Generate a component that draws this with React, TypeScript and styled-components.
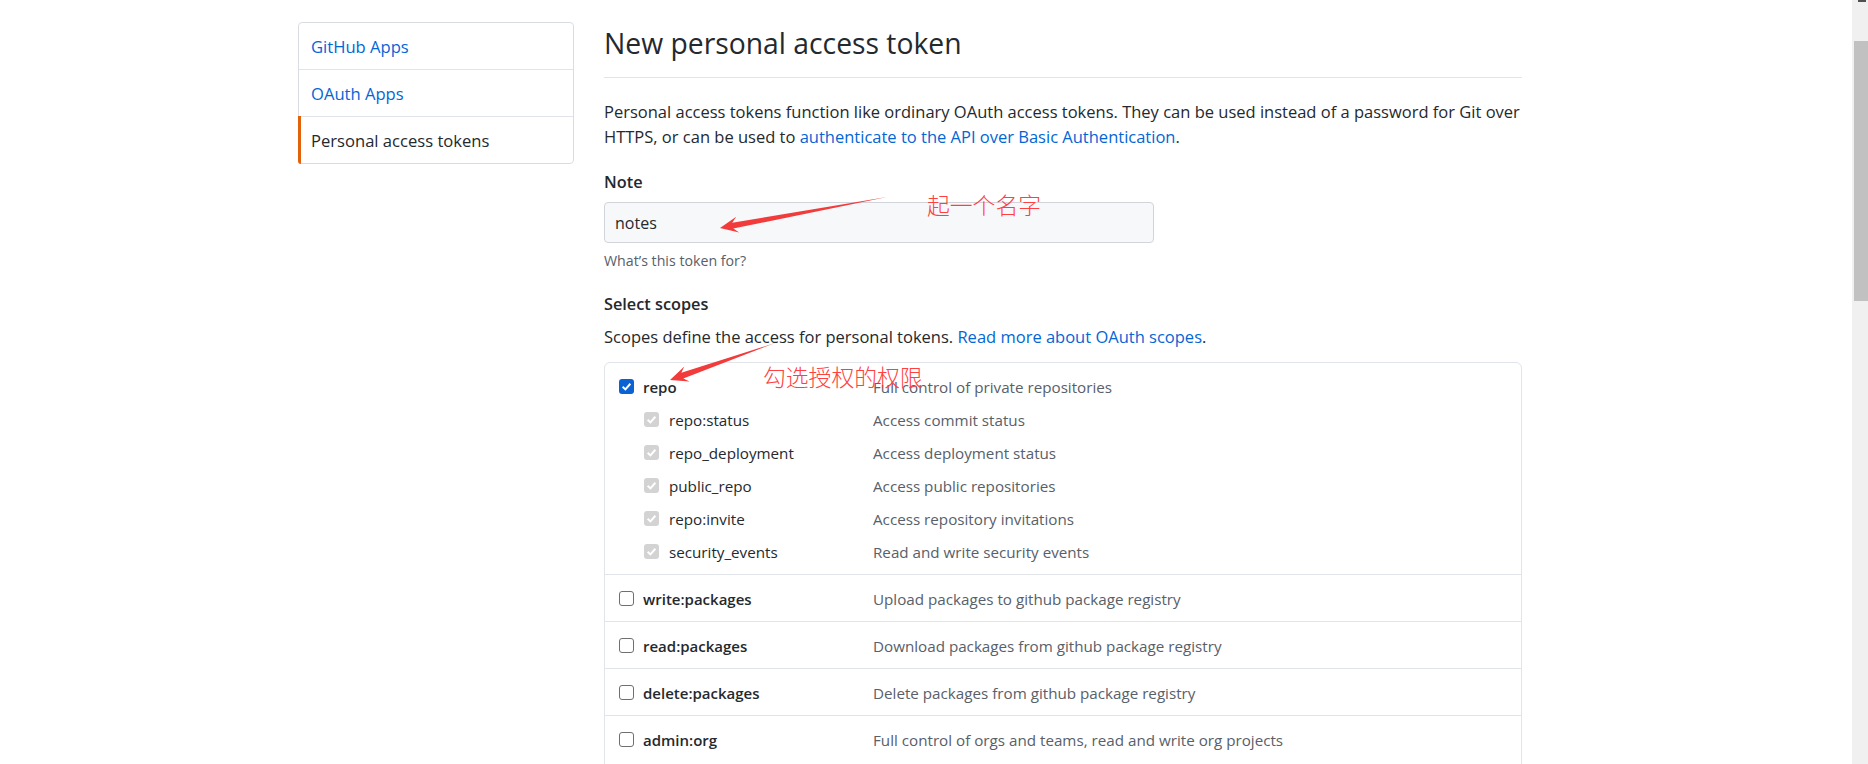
import React from "react";
import styled, { createGlobalStyle, css } from "styled-components";

const GlobalStyle = createGlobalStyle`
  html, body {
    margin: 0;
    padding: 0;
    background: #fff;
    overflow: hidden;
  }
  * {
    box-sizing: border-box;
  }
`;

const Screen = styled.div`
  position: relative;
  display: flex;
  width: 1868px;
  height: 764px;
  overflow: hidden;
  font-family: "Open Sans", "Noto Sans", sans-serif;
  color: #24292e;
`;

const Page = styled.div`
  flex: 1;
  display: flex;
  align-items: flex-start;
  gap: 30px;
  padding: 22px 0 0 298px;
`;

const Sidebar = styled.nav`
  width: 276px;
  flex: none;
  display: flex;
  flex-direction: column;
  border: 1px solid #d9dde2;
  border-radius: 4px;
`;

const MenuItem = styled.a<{ $active?: boolean }>`
  position: relative;
  height: 46px;
  display: flex;
  align-items: center;
  padding: 0 12px;
  font-size: 16.6px;
  color: ${(p) => (p.$active ? "#24292e" : "#0366d6")};
  text-decoration: none;

  & + & {
    height: 47px;
    border-top: 1px solid #e1e4e8;
  }

  ${(p) =>
    p.$active &&
    css`
      &::before {
        content: "";
        position: absolute;
        left: -1px;
        top: -1px;
        bottom: -1px;
        width: 3px;
        background: #e36209;
        border-radius: 0 0 0 4px;
      }
    `}
`;

const Main = styled.main`
  width: 918px;
  flex: none;
`;

const Subhead = styled.div`
  margin-top: 3px;
  padding-bottom: 16px;
  border-bottom: 1px solid #e1e4e8;
`;

const Title = styled.h2`
  margin: 0;
  font-size: 28.3px;
  line-height: 36px;
  font-weight: 400;
`;

const Lead = styled.p<{ $top: number }>`
  margin: ${(p) => p.$top}px 0 0;
  font-size: 16.5px;
  line-height: 25px;
`;

const Link = styled.a`
  color: #0366d6;
  text-decoration: none;
`;

const FieldLabel = styled.div<{ $top: number }>`
  margin-top: ${(p) => p.$top}px;
  font-size: 16.3px;
  line-height: 22px;
  font-weight: 600;
`;

const TextInput = styled.input`
  display: block;
  margin-top: 9px;
  width: 550px;
  height: 41px;
  padding: 0 10px;
  border: 1px solid #d1d5da;
  border-radius: 4px;
  background: #f6f8fa;
  font-family: inherit;
  font-size: 16px;
  color: #24292e;
  outline: none;
`;

const Hint = styled.div`
  margin-top: 8px;
  font-size: 14.2px;
  line-height: 20px;
  color: #586069;
`;

const ScopeTable = styled.div`
  margin-top: 13px;
  border: 1px solid #e1e4e8;
  border-radius: 6px;
`;

const ScopeGroup = styled.div`
  padding: 7px 0 6px;

  & + & {
    border-top: 1px solid #e1e4e8;
  }
`;

const ScopeLine = styled.div<{ $sub?: boolean }>`
  height: 33px;
  display: flex;
  align-items: center;
  padding-left: ${(p) => (p.$sub ? 39 : 14)}px;
`;

const ScopeName = styled.span<{ $sub?: boolean }>`
  width: ${(p) => (p.$sub ? 204 : 230)}px;
  margin-left: ${(p) => (p.$sub ? 10 : 9)}px;
  flex: none;
  font-size: ${(p) => (p.$sub ? 15.2 : 15)}px;
  font-weight: ${(p) => (p.$sub ? 400 : 600)};
  color: #24292e;
`;

const ScopeDesc = styled.span`
  font-size: 15.2px;
  color: #586069;
  white-space: nowrap;
`;

type BoxState = "on" | "off" | "locked";

const Box = styled.span<{ $state: BoxState }>`
  width: 15px;
  height: 15px;
  flex: none;
  display: flex;
  align-items: center;
  justify-content: center;
  border-radius: 3px;
  ${(p) =>
    p.$state === "on"
      ? css`
          background: #0b63d3;
        `
      : p.$state === "locked"
      ? css`
          background: #d3d3d3;
        `
      : css`
          background: #fff;
          border: 1px solid #6f6f6f;
        `}
`;

function Check({ state }: { state: BoxState }) {
  return (
    <Box $state={state}>
      {state !== "off" && (
        <svg width="11" height="11" viewBox="0 0 10 10">
          <path d="M1.5 5.2 L4 7.6 L8.5 2.5" fill="none" stroke="#fff" strokeWidth="1.8" />
        </svg>
      )}
    </Box>
  );
}

const Scrollbar = styled.div`
  width: 16px;
  flex: none;
  display: flex;
  flex-direction: column;
  background: #f0f0f0;
`;

const ScrollArrow = styled.div`
  width: 8px;
  height: 2px;
  margin-left: 6px;
  background: #505050;
`;

const ScrollThumb = styled.div`
  margin: 39px 0 0 2px;
  width: 14px;
  height: 260px;
  background: #c1c1c1;
`;

const Markup = styled.svg`
  position: absolute;
  left: 0;
  top: 0;
  width: 1868px;
  height: 764px;
  pointer-events: none;
`;

const Remark = styled.div<{ $x: number; $y: number }>`
  position: absolute;
  left: ${(p) => p.$x}px;
  top: ${(p) => p.$y}px;
  font-family: "Noto Sans CJK SC", "Noto Sans", sans-serif;
  font-size: 22.8px;
  font-weight: 300;
  line-height: 26px;
  color: #ff4040;
  white-space: nowrap;
`;

// screenshot-tool arrow: thin tail that grows into a swept head
function arrowPoints(tx: number, ty: number, px: number, py: number) {
  const len = Math.hypot(px - tx, py - ty);
  const dx = (px - tx) / len;
  const dy = (py - ty) / len;
  const nx = -dy;
  const ny = dx;
  const at = (back: number, side: number) =>
    `${(px - dx * back + nx * side).toFixed(1)},${(py - dy * back + ny * side).toFixed(1)}`;
  return [
    `${tx},${ty}`,
    at(13, 3),
    at(18, 8),
    `${px},${py}`,
    at(18, -8),
    at(13, -3),
  ].join(" ");
}

const scopes = [
  {
    name: "repo",
    desc: "Full control of private repositories",
    checked: true,
    subs: [
      ["repo:status", "Access commit status"],
      ["repo_deployment", "Access deployment status"],
      ["public_repo", "Access public repositories"],
      ["repo:invite", "Access repository invitations"],
      ["security_events", "Read and write security events"],
    ],
  },
  { name: "write:packages", desc: "Upload packages to github package registry" },
  { name: "read:packages", desc: "Download packages from github package registry" },
  { name: "delete:packages", desc: "Delete packages from github package registry" },
  {
    name: "admin:org",
    desc: "Full control of orgs and teams, read and write org projects",
    subs: [
      ["write:org", "Read and write org and team membership, read and write org projects"],
      ["read:org", "Read org and team membership, read org projects"],
    ],
  },
];

export default function App() {
  return (
    <Screen>
      <GlobalStyle />
      <Page>
        <Sidebar>
          <MenuItem href="#">GitHub Apps</MenuItem>
          <MenuItem href="#">OAuth Apps</MenuItem>
          <MenuItem href="#" $active>
            Personal access tokens
          </MenuItem>
        </Sidebar>

        <Main>
          <Subhead>
            <Title>New personal access token</Title>
          </Subhead>
          <Lead $top={21}>
            Personal access tokens function like ordinary OAuth access tokens. They can be used
            instead of a password for Git over HTTPS, or can be used to{" "}
            <Link href="#">authenticate to the API over Basic Authentication</Link>.
          </Lead>

          <FieldLabel $top={22}>Note</FieldLabel>
          <TextInput defaultValue="notes" />
          <Hint>What’s this token for?</Hint>

          <FieldLabel $top={22}>Select scopes</FieldLabel>
          <Lead $top={9}>
            Scopes define the access for personal tokens.{" "}
            <Link href="#">Read more about OAuth scopes</Link>.
          </Lead>

          <ScopeTable>
            {scopes.map((s) => (
              <ScopeGroup key={s.name}>
                <ScopeLine>
                  <Check state={s.checked ? "on" : "off"} />
                  <ScopeName>{s.name}</ScopeName>
                  <ScopeDesc>{s.desc}</ScopeDesc>
                </ScopeLine>
                {s.subs?.map(([name, desc]) => (
                  <ScopeLine $sub key={name}>
                    <Check state={s.checked ? "locked" : "off"} />
                    <ScopeName $sub>{name}</ScopeName>
                    <ScopeDesc>{desc}</ScopeDesc>
                  </ScopeLine>
                ))}
              </ScopeGroup>
            ))}
          </ScopeTable>
        </Main>
      </Page>

      <Scrollbar>
        <ScrollArrow />
        <ScrollThumb />
      </Scrollbar>

      <Markup viewBox="0 0 1868 764">
        <polygon points={arrowPoints(887, 197, 720, 228)} fill="#f23b3b" />
        <polygon points={arrowPoints(775, 343, 670, 380)} fill="#f23b3b" />
      </Markup>
      <Remark $x={927} $y={192}>起一个名字</Remark>
      <Remark $x={763} $y={364}>勾选授权的权限</Remark>
    </Screen>
  );
}
